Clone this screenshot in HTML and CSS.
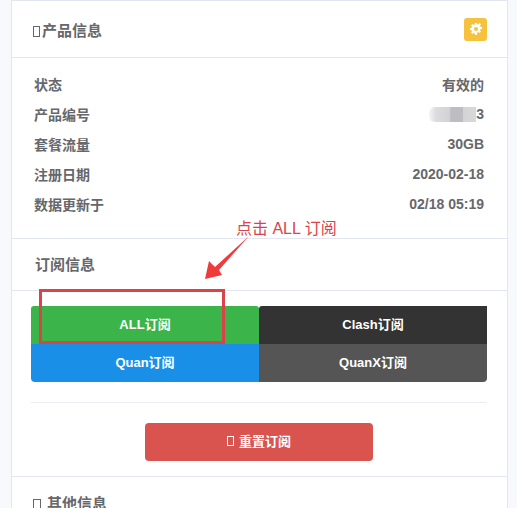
FILE: index.html
```html
<!DOCTYPE html>
<html lang="zh-CN">

<head>
  <meta charset="UTF-8">
  <meta name="viewport" content="width=device-width, initial-scale=1.0">
  <title>产品信息</title>
  <link rel="stylesheet" href="styles.css">
</head>

<body>

  <div class="card">
    <div class="card-header">
      <h2 class="title"><span class="tofu"></span>产品信息</h2>
      <span class="gear-btn">
        <svg viewBox="0 0 12 12" width="12" height="12">
          <path fill="#fff" fill-rule="evenodd" d="M5 0h2l.3 1.6 1-.4L9.6 0l1.4 1.4-1.1 1.4.5 1 1.6.2v2l-1.6.3-.4 1 1 1.3-1.4 1.4-1.3-1-1 .4L7 12H5l-.3-1.6-1-.4-1.3 1L1 9.600l1-1.300-.4-1L0 7V5l1.600-.3.4-1L1 2.400 2.400 1l1.300 1 1-.4zM6 4a2 2 0 1 0 0 4 2 2 0 0 0 0-4z" />
        </svg>
      </span>
    </div>

    <div class="info-list">
      <div class="info-row"><span>状态</span><span>有效的</span></div>
      <div class="info-row"><span>产品编号</span><span class="masked"><span class="mosaic"></span>3</span></div>
      <div class="info-row"><span>套餐流量</span><span>30GB</span></div>
      <div class="info-row"><span>注册日期</span><span>2020-02-18</span></div>
      <div class="info-row"><span>数据更新于</span><span>02/18 05:19</span></div>
    </div>

    <div class="sub-header">订阅信息</div>

    <div class="sub-body">
      <div class="sub-grid">
        <a class="sub-btn green">ALL订阅</a>
        <a class="sub-btn dark">Clash订阅</a>
        <a class="sub-btn blue">Quan订阅</a>
        <a class="sub-btn gray">QuanX订阅</a>
      </div>
      <hr class="line">
      <div class="reset-wrap">
        <a class="reset-btn"><span class="tofu small"></span>重置订阅</a>
      </div>
    </div>

    <div class="other-header"><span class="tofu wide"></span>其他信息</div>
  </div>

  <!-- 标注 -->
  <div class="note-box"></div>
  <div class="note-text">点击 ALL 订阅</div>
  <svg class="note-arrow" viewBox="0 0 50 48" width="50" height="48">
    <polygon fill="#f03a3c" points="1,46 5,28 11,34 45,3 15,37 18,42" />
  </svg>

</body>

</html>
```

FILE: styles.css
```css
html,
body {
  height: 100%;
}

body {
  margin: 0;
  padding-left: 11px;
  overflow: hidden;
  background-color: #f8f9fc;
  color: #66676b;
  font-family: "Liberation Sans", "Noto Sans CJK SC", sans-serif;
  font-size: 14px;
  font-weight: 700;
}

.card {
  width: 495px;
  background-color: #fff;
  border: 1px solid #e3e6f0;
}

.card-header {
  display: flex;
  align-items: center;
  justify-content: space-between;
  height: 56px;
  padding: 0 20px 0 21px;
  border-bottom: 1px solid #e3e6f0;
}

.title {
  margin: 0;
  font-size: 15px;
  font-weight: 700;
}

/* 缺字的方块 */
.tofu {
  display: inline-block;
  box-sizing: border-box;
  width: 7px;
  height: 11px;
  margin-right: 2px;
  border: 1px solid #66676b;
  vertical-align: -1px;
}

.tofu.small {
  width: 7px;
  height: 10px;
  margin-right: 5px;
  border-color: #fff;
}

.tofu.wide {
  width: 8px;
  height: 11px;
  margin-right: 6px;
}

.gear-btn {
  display: flex;
  align-items: center;
  justify-content: center;
  width: 23px;
  height: 23px;
  background-color: #f6c23e;
  border-radius: 3px;
}

.info-list {
  padding: 12px 23px 18px 22px;
  border-bottom: 1px solid #e3e6f0;
}

.info-row {
  display: flex;
  align-items: center;
  justify-content: space-between;
  box-sizing: border-box;
  height: 30px;
  padding-bottom: 2px;
}

.masked {
  display: flex;
  align-items: center;
}

.mosaic {
  width: 47px;
  height: 15px;
  background: linear-gradient(90deg, #f4f4f5 0, #dcdcdf 15%, #d2d2d5 45%, #bdbdc2 46%, #bdbdc2 72%, #d4d4d7 73%, #d8d8da 100%);
  border-radius: 6px 0 0 6px;
}

.sub-header {
  display: flex;
  align-items: center;
  box-sizing: border-box;
  height: 52px;
  padding: 0 0 2px 23px;
  font-size: 15px;
  border-bottom: 1px solid #e3e6f0;
}

.sub-body {
  padding: 15px 20px 15px 19px;
  border-bottom: 1px solid #e3e6f0;
}

.sub-grid {
  display: grid;
  grid-template-columns: 228px 228px;
  grid-auto-rows: 38px;
}

.sub-btn {
  display: flex;
  align-items: center;
  justify-content: center;
  box-sizing: border-box;
  padding-bottom: 3px;
  color: #fff;
  font-size: 13px;
}

.green {
  background-color: #3bb54a;
  border-radius: 3px 3px 0 0;
}

.dark {
  background-color: #333;
  border-radius: 3px 0 0 0;
}

.blue {
  background-color: #1a8fe8;
  border-radius: 0 0 0 4px;
}

.gray {
  background-color: #555;
  border-radius: 0 0 4px 0;
}

.line {
  margin: 20px 0;
  border: 0;
  border-top: 1px solid #eaecf4;
}

.reset-wrap {
  display: flex;
  justify-content: center;
}

.reset-btn {
  display: flex;
  align-items: center;
  justify-content: center;
  box-sizing: border-box;
  width: 228px;
  height: 38px;
  padding-bottom: 3px;
  color: #fff;
  font-size: 13px;
  background-color: #d9534f;
  border-radius: 4px;
}

.other-header {
  padding: 15px 21px;
  font-size: 15px;
}

/* 截图上的红色标注 */
.note-box {
  position: absolute;
  left: 39px;
  top: 289px;
  width: 180px;
  height: 49px;
  border: 3px solid #d9434a;
}

.note-text {
  position: absolute;
  left: 236px;
  top: 215px;
  color: #d9434a;
  font-size: 16px;
  font-weight: 400;
  white-space: nowrap;
}

.note-arrow {
  position: absolute;
  left: 204px;
  top: 233px;
}
```
